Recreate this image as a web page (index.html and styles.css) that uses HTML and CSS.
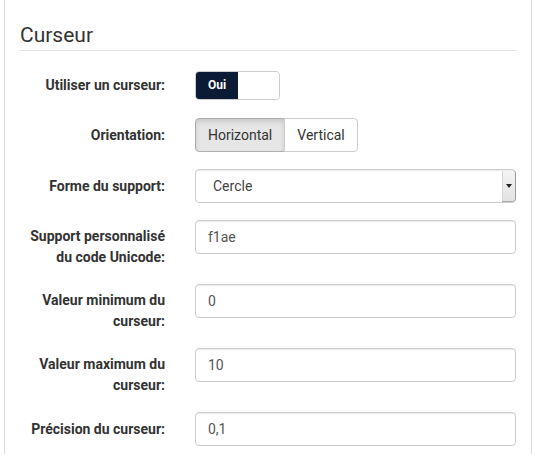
FILE: index.html
```html
<!DOCTYPE html>
<html lang="fr">
<head>
    <meta charset="UTF-8">
    <meta name="viewport" content="width=device-width, initial-scale=1.0">
    <title>Curseur</title>
    <link rel="stylesheet" href="styles.css">
</head>
<body>
    <div class="panel">
        <h3 class="section-title">Curseur</h3>
        <form class="settings">
            <div class="row">
                <label class="field-label">Utiliser un curseur:</label>
                <div class="switch">
                    <span class="switch-on">Oui</span>
                    <span class="switch-off"></span>
                </div>
            </div>
            <div class="row">
                <label class="field-label">Orientation:</label>
                <div class="btn-group">
                    <button type="button" class="btn active">Horizontal</button>
                    <button type="button" class="btn">Vertical</button>
                </div>
            </div>
            <div class="row">
                <label class="field-label">Forme du support:</label>
                <div class="select">
                    <span class="select-value">Cercle</span>
                    <span class="select-arrow"><i class="caret"></i></span>
                </div>
            </div>
            <div class="row">
                <label class="field-label two-lines">Support personnalisé du code Unicode:</label>
                <input type="text" class="field" value="f1ae">
            </div>
            <div class="row">
                <label class="field-label two-lines">Valeur minimum du curseur:</label>
                <input type="text" class="field" value="0">
            </div>
            <div class="row">
                <label class="field-label two-lines">Valeur maximum du curseur:</label>
                <input type="text" class="field" value="10">
            </div>
            <div class="row">
                <label class="field-label">Précision du curseur:</label>
                <input type="text" class="field" value="0,1">
            </div>
        </form>
    </div>
</body>
</html>
```

FILE: styles.css
```css
body {
    margin: 0;
    background-color: #fff;
    font-family: Roboto, "Liberation Sans", Arial, sans-serif;
    color: #333;
    overflow: hidden;
}
.panel {
    width: 496px;
    margin: 0 0 0 4px;
    padding: 21px 15px 20px 15px;
    border-left: 1px solid #ddd;
    border-right: 1px solid #ddd;
}
.section-title {
    margin: 0 0 20px 0;
    padding: 3px 0 3px 0;
    font-size: 21px;
    font-weight: 400;
    line-height: 23px;
    border-bottom: 1px solid #e5e5e5;
}
.settings {
    display: flex;
    flex-direction: column;
    gap: 17px;
}
.row {
    display: grid;
    grid-template-columns: 145px 1fr;
    column-gap: 30px;
    align-items: start;
}
.field-label {
    font-size: 14px;
    font-weight: 700;
    text-align: right;
    line-height: 20px;
    padding-top: 7px;
}
.row:first-child .field-label {
    padding-top: 4px;
}
.field-label.two-lines {
    padding: 6px 0 0 8px;
    line-height: 21px;
    margin-bottom: -1px;
}
.switch {
    display: flex;
    width: 83px;
    height: 27px;
    margin-bottom: 1px;
    border: 1px solid #ccc;
    border-radius: 4px;
    overflow: hidden;
}
.switch-on {
    width: 42px;
    background-color: #0b1a35;
    color: #fff;
    font-size: 12px;
    font-weight: 700;
    line-height: 27px;
    text-align: center;
}
.switch-off {
    flex: 1;
    background-color: #fff;
}
.btn-group {
    display: flex;
}
.btn {
    height: 34px;
    padding: 0 12px;
    font-family: inherit;
    font-size: 14px;
    color: #333;
    background-color: #fff;
    border: 1px solid #ccc;
    cursor: pointer;
}
.btn:first-child {
    border-radius: 4px 0 0 4px;
}
.btn:last-child {
    border-radius: 0 4px 4px 0;
    margin-left: -1px;
}
.btn.active {
    background-color: #e6e6e6;
    border-color: #adadad;
    box-shadow: inset 0 3px 5px rgba(0, 0, 0, 0.125);
}
.select {
    display: flex;
    justify-content: space-between;
    align-items: stretch;
    height: 32px;
    border: 1px solid #ccc;
    border-radius: 4px;
    box-shadow: inset 0 1px 1px rgba(0, 0, 0, 0.075);
}
.select-value {
    padding-left: 17px;
    font-size: 14px;
    line-height: 32px;
    color: #444;
}
.select-arrow {
    display: flex;
    align-items: center;
    justify-content: center;
    width: 12px;
    margin: 1px 0;
    background: linear-gradient(#f4f4f4, #e2e2e2);
    border-left: 1px solid #d6d6d6;
    border-radius: 0 3px 3px 0;
    box-shadow: 1px 0 0 #999, 0 1px 0 #aaa;
}
.caret {
    width: 0;
    height: 0;
    border-left: 3px solid transparent;
    border-right: 3px solid transparent;
    border-top: 4px solid #222;
}
.field {
    box-sizing: border-box;
    width: 100%;
    height: 34px;
    padding: 6px 12px;
    font-family: inherit;
    font-size: 14px;
    color: #555;
    border: 1px solid #ccc;
    border-radius: 4px;
    box-shadow: inset 0 1px 1px rgba(0, 0, 0, 0.075);
}
```
